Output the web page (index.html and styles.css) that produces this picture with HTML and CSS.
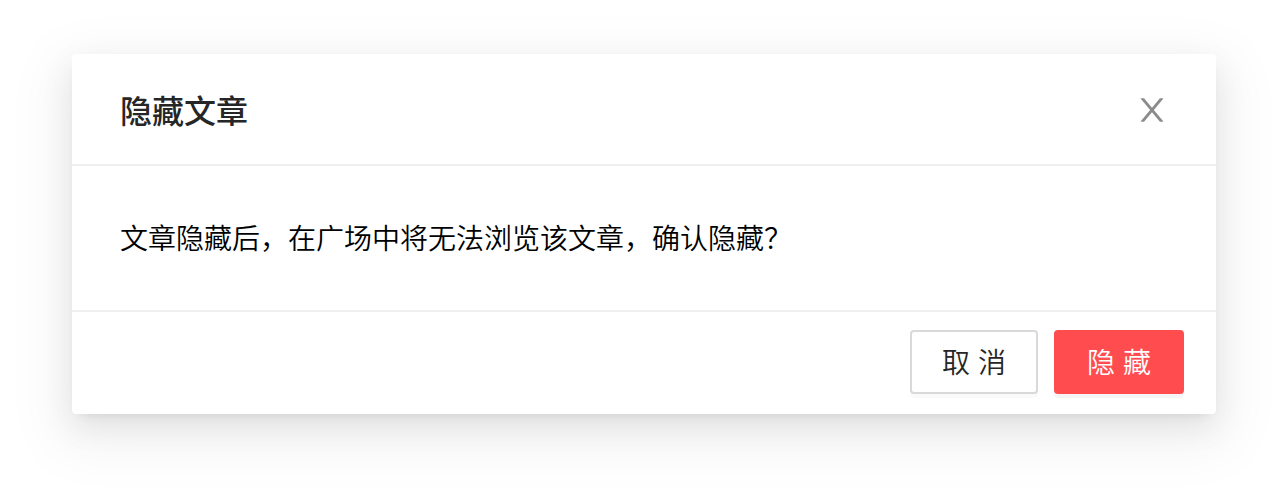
FILE: index.html
```html
<!DOCTYPE html>
<html lang="zh-CN">
<head>
<meta charset="utf-8">
<meta name="viewport" content="width=device-width, initial-scale=1">
<title>隐藏文章</title>
<link rel="stylesheet" href="styles.css">
</head>
<body>
<section class="modal" role="dialog" aria-modal="true" aria-labelledby="modal-title">
  <header class="modal-header">
    <h1 class="modal-title" id="modal-title">隐藏文章</h1>
    <button class="modal-close" type="button" aria-label="关闭">
      <svg class="close-icon" viewBox="64 64 896 896" aria-hidden="true"><path fill="currentColor" d="M563.8 512l262.5-312.9c4.4-5.2.7-13.1-6.1-13.1h-79.8c-4.7 0-9.2 2.1-12.3 5.7L511.6 449.8 295.1 191.7c-3-3.6-7.5-5.7-12.3-5.7H203c-6.8 0-10.5 7.9-6.1 13.1L459.4 512 196.9 824.9A7.95 7.95 0 0 0 203 838h79.8c4.7 0 9.2-2.1 12.3-5.7l216.5-258.1 216.5 258.1c3 3.6 7.5 5.7 12.3 5.7h79.8c6.8 0 10.5-7.9 6.1-13.1L563.8 512z"/></svg>
    </button>
  </header>
  <p class="modal-body">文章隐藏后，在广场中将无法浏览该文章，确认隐藏？</p>
  <footer class="modal-footer">
    <button class="button" type="button">取 消</button>
    <button class="button button-danger" type="button">隐 藏</button>
  </footer>
</section>
</body>
</html>
```

FILE: styles.css
```css
* {
  box-sizing: border-box;
}

body {
  margin: 0;
  padding: 54px 72px 90px;
  background: #fff;
  color: #000;
  font-family: "Noto Sans CJK SC", sans-serif;
  font-size: 28px;
}

.modal {
  background: #fff;
  border-radius: 4px;
  box-shadow:
    0 6px 12px -8px rgba(0, 0, 0, 0.12),
    0 12px 32px rgba(0, 0, 0, 0.08),
    0 18px 56px 16px rgba(0, 0, 0, 0.05);
}

.modal-header {
  display: flex;
  align-items: center;
  justify-content: space-between;
  padding: 32px 48px;
  border-bottom: 2px solid #f0f0f0;
}

.modal-title {
  margin: 0;
  color: #262626;
  font-size: 32px;
  font-weight: 500;
  line-height: 46px;
}

.modal-close {
  display: flex;
  padding: 2px 0 0;
  border: 0;
  background: none;
  color: #8c8c8c;
}

.close-icon {
  width: 32px;
  height: 32px;
}

.modal-body {
  margin: 0;
  padding: 48px 48px 50px;
  font-weight: 350;
  line-height: 46px;
}

.modal-footer {
  display: flex;
  justify-content: flex-end;
  gap: 16px;
  padding: 18px 32px 20px;
  border-top: 2px solid #f0f0f0;
}

.button {
  min-width: 128px;
  height: 64px;
  padding: 4px 30px 0;
  border: 2px solid #d9d9d9;
  border-radius: 4px;
  background: #fff;
  box-shadow: 0 4px 0 rgba(0, 0, 0, 0.02);
  color: #262626;
  font-family: "Liberation Sans", "Noto Sans CJK SC", sans-serif;
  font-size: 28px;
  font-weight: 350;
  line-height: 56px;
}

.button-danger {
  min-width: 130px;
  border-color: #ff4d4f;
  background: #ff4d4f;
  box-shadow: 0 4px 0 rgba(0, 0, 0, 0.04);
  color: #fff;
}
```
